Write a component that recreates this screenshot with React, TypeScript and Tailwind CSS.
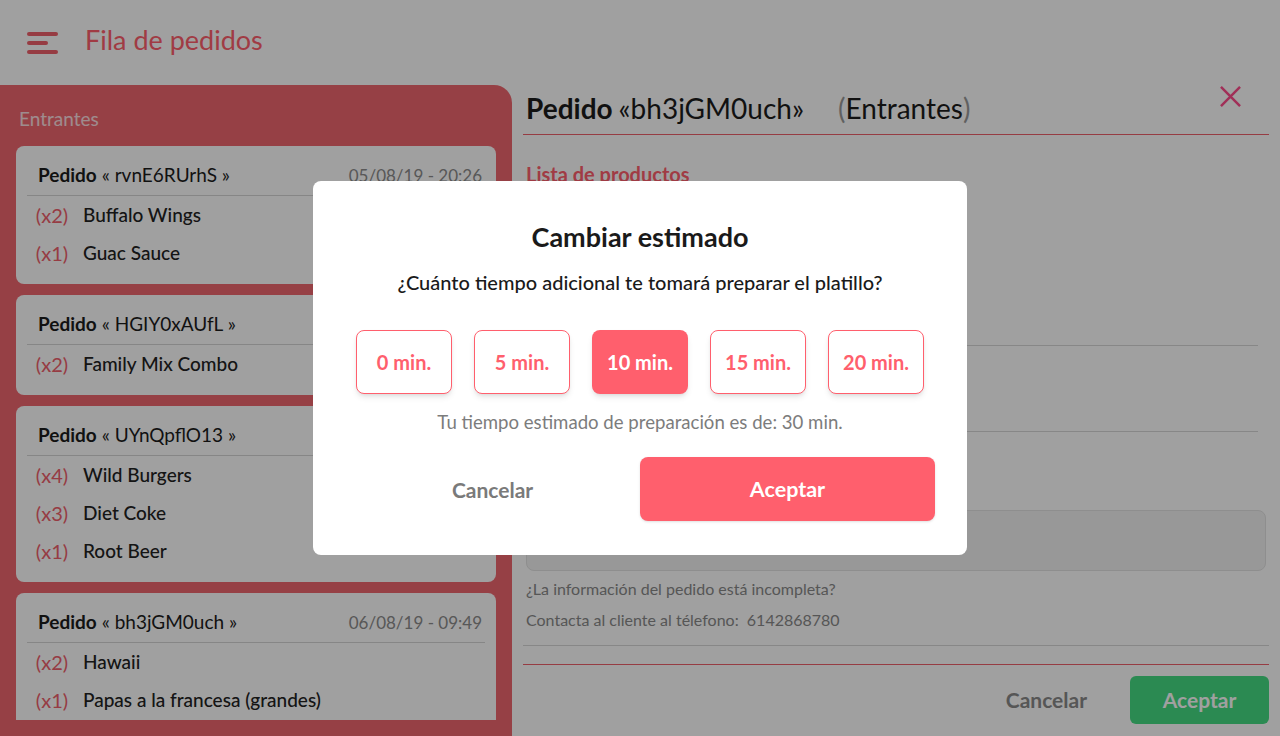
import React from "react";

const orders = [
  {
    id: "rvnE6RUrhS",
    date: "05/08/19 - 20:26",
    items: [
      { qty: 2, name: "Buffalo Wings" },
      { qty: 1, name: "Guac Sauce" },
    ],
  },
  {
    id: "HGIY0xAUfL",
    date: "05/08/19 - 21:02",
    items: [{ qty: 2, name: "Family Mix Combo" }],
  },
  {
    id: "UYnQpflO13",
    date: "06/08/19 - 09:12",
    items: [
      { qty: 4, name: "Wild Burgers" },
      { qty: 3, name: "Diet Coke" },
      { qty: 1, name: "Root Beer" },
    ],
  },
  {
    id: "bh3jGM0uch",
    date: "06/08/19 - 09:49",
    items: [
      { qty: 2, name: "Hawaii" },
      { qty: 1, name: "Papas a la francesa (grandes)" },
    ],
  },
];

const options = [0, 5, 10, 15, 20];

function OrderCard({ order }: { order: (typeof orders)[number] }) {
  return (
    <div className="bg-white rounded-lg shrink-0 pb-3">
      <div className="mx-[11px] h-[50px] pt-[10px] px-[11px] flex items-center justify-between border-b border-[#d6d6d6]">
        <span className="text-[19px] text-[#1c1c1c]">
          <span className="font-bold">Pedido</span> « {order.id} »
        </span>
        <span className="text-[17px] text-[#8c8c8c] -mr-[8px]">{order.date}</span>
      </div>
      {order.items.map((it) => (
        <div key={it.name} className="h-[38px] flex items-center pl-[14px]">
          <span className="w-[44px] text-center text-[20px] text-[#f0606c]">(x{it.qty})</span>
          <span className="ml-[9px] text-[19px] font-medium text-[#222]">{it.name}</span>
        </div>
      ))}
    </div>
  );
}

export default function App() {
  return (
    <div
      className="relative w-[1280px] h-[736px] overflow-hidden bg-white flex flex-col"
      style={{ fontFamily: "Lato, 'Noto Sans', sans-serif" }}
    >
      {/* header */}
      <header className="h-[85px] shrink-0 flex items-center pl-[27px]">
        <div className="flex flex-col gap-[5px]">
          <span className="block w-[31px] h-[4px] rounded-full bg-[#f0606c]" />
          <span className="block w-[21px] h-[4px] rounded-full bg-[#f0606c]" />
          <span className="block w-[31px] h-[4px] rounded-full bg-[#f0606c]" />
        </div>
        <h1 className="ml-[27px] text-[27px] text-[#ff5f6d] -mt-[4px]">Fila de pedidos</h1>
      </header>

      <div className="flex flex-1 min-h-0">
        {/* left column */}
        <aside className="w-[512px] shrink-0 bg-[#f0666f] rounded-tr-[18px] flex flex-col px-4 pb-4">
          <div className="h-[61px] shrink-0 flex items-center pl-[3px] pt-[7px] text-[19px] text-white/80">
            Entrantes
          </div>
          <div className="flex-1 min-h-0 overflow-hidden flex flex-col gap-[11px]">
            {orders.map((o) => (
              <OrderCard key={o.id} order={o} />
            ))}
          </div>
        </aside>

        {/* order detail */}
        <section className="flex-1 flex flex-col px-[11px]">
          <div className="h-[50px] shrink-0 flex items-center justify-between border-b border-[#f0606c]">
            <div className="flex items-center pl-[3px] -mt-[4px] text-[28px] text-[#1c1c1c]">
              <span className="font-bold">Pedido</span>
              <span className="ml-[6px]">«bh3jGM0uch»</span>
              <span className="ml-[34px] text-[#9a9a9a]">(</span>
              <span>Entrantes</span>
              <span className="text-[#9a9a9a]">)</span>
            </div>
            <svg width="21" height="21" viewBox="0 0 22 22" className="mr-[28px] -mt-[27px]">
              <path d="M1 1L21 21M21 1L1 21" stroke="#ff4c8c" strokeWidth="2.6" />
            </svg>
          </div>

          <div className="h-[210px] shrink-0 pt-[24px] pl-[3px]">
            <h2 className="text-[20px] font-bold text-[#ff5f6d]">Lista de productos</h2>
          </div>

          <div className="h-[86px] shrink-0 border-t border-[#d8d8d8] mr-[11px]" />
          <div className="h-[79px] shrink-0 border-t border-[#d8d8d8] mr-[11px]" />

          <div className="h-[61px] shrink-0 ml-[3px] mr-[3px] rounded-lg border border-[#e2e2e2] bg-[#f3f3f3]" />

          <p className="mt-[6px] pl-[3px] text-[16px] text-[#8a8a8a]">¿La información del pedido está incompleta?</p>
          <p className="mt-[7px] pl-[3px] text-[16px] text-[#8a8a8a]">Contacta al cliente al télefono:&nbsp; 6142868780</p>

          <div className="mt-[13px] border-t border-[#d8d8d8]" />
          <div className="mt-[18px] border-t border-[#f0606c]" />

          <div className="flex items-center justify-end gap-[43px] mt-[11px]">
            <span className="text-[21px] font-bold text-[#8a8a8a]">Cancelar</span>
            <button className="w-[139px] h-[48px] rounded-md bg-[#45dc83] text-white text-[21px] font-bold">
              Aceptar
            </button>
          </div>
        </section>
      </div>

      {/* overlay + modal */}
      <div className="absolute inset-0 bg-black/[0.373] flex items-center justify-center">
        <div className="w-[654px] h-[374px] bg-white rounded-lg flex flex-col items-center pt-[36px]">
          <h3 className="text-[27px] font-bold text-[#1a1a1a]">Cambiar estimado</h3>
          <p className="mt-[9px] text-[20px] font-medium text-[#1a1a1a]">
            ¿Cuánto tiempo adicional te tomará preparar el platillo?
          </p>
          <div className="mt-[33px] flex gap-[22px]">
            {options.map((m) => (
              <button
                key={m}
                className={
                  m === 10
                    ? "w-[96px] h-[64px] rounded-lg bg-[#ff5f6d] text-white text-[20px] font-bold shadow-md"
                    : "w-[96px] h-[64px] rounded-lg border border-[#ff5f6d] bg-white text-[#ff5f6d] text-[20px] font-bold shadow-md"
                }
              >
                {m} min.
              </button>
            ))}
          </div>
          <p className="mt-[15px] text-[18.6px] text-[#7c7c7c]">
            Tu tiempo estimado de preparación es de: 30 min.
          </p>
          <div className="mt-[21px] w-full px-8 grid grid-cols-2">
            <button className="h-[64px] text-[21px] font-bold text-[#7a7a7a]">Cancelar</button>
            <button className="h-[64px] rounded-lg bg-[#ff5f6d] text-white text-[21.5px] font-bold shadow-sm">
              Aceptar
            </button>
          </div>
        </div>
      </div>
    </div>
  );
}
